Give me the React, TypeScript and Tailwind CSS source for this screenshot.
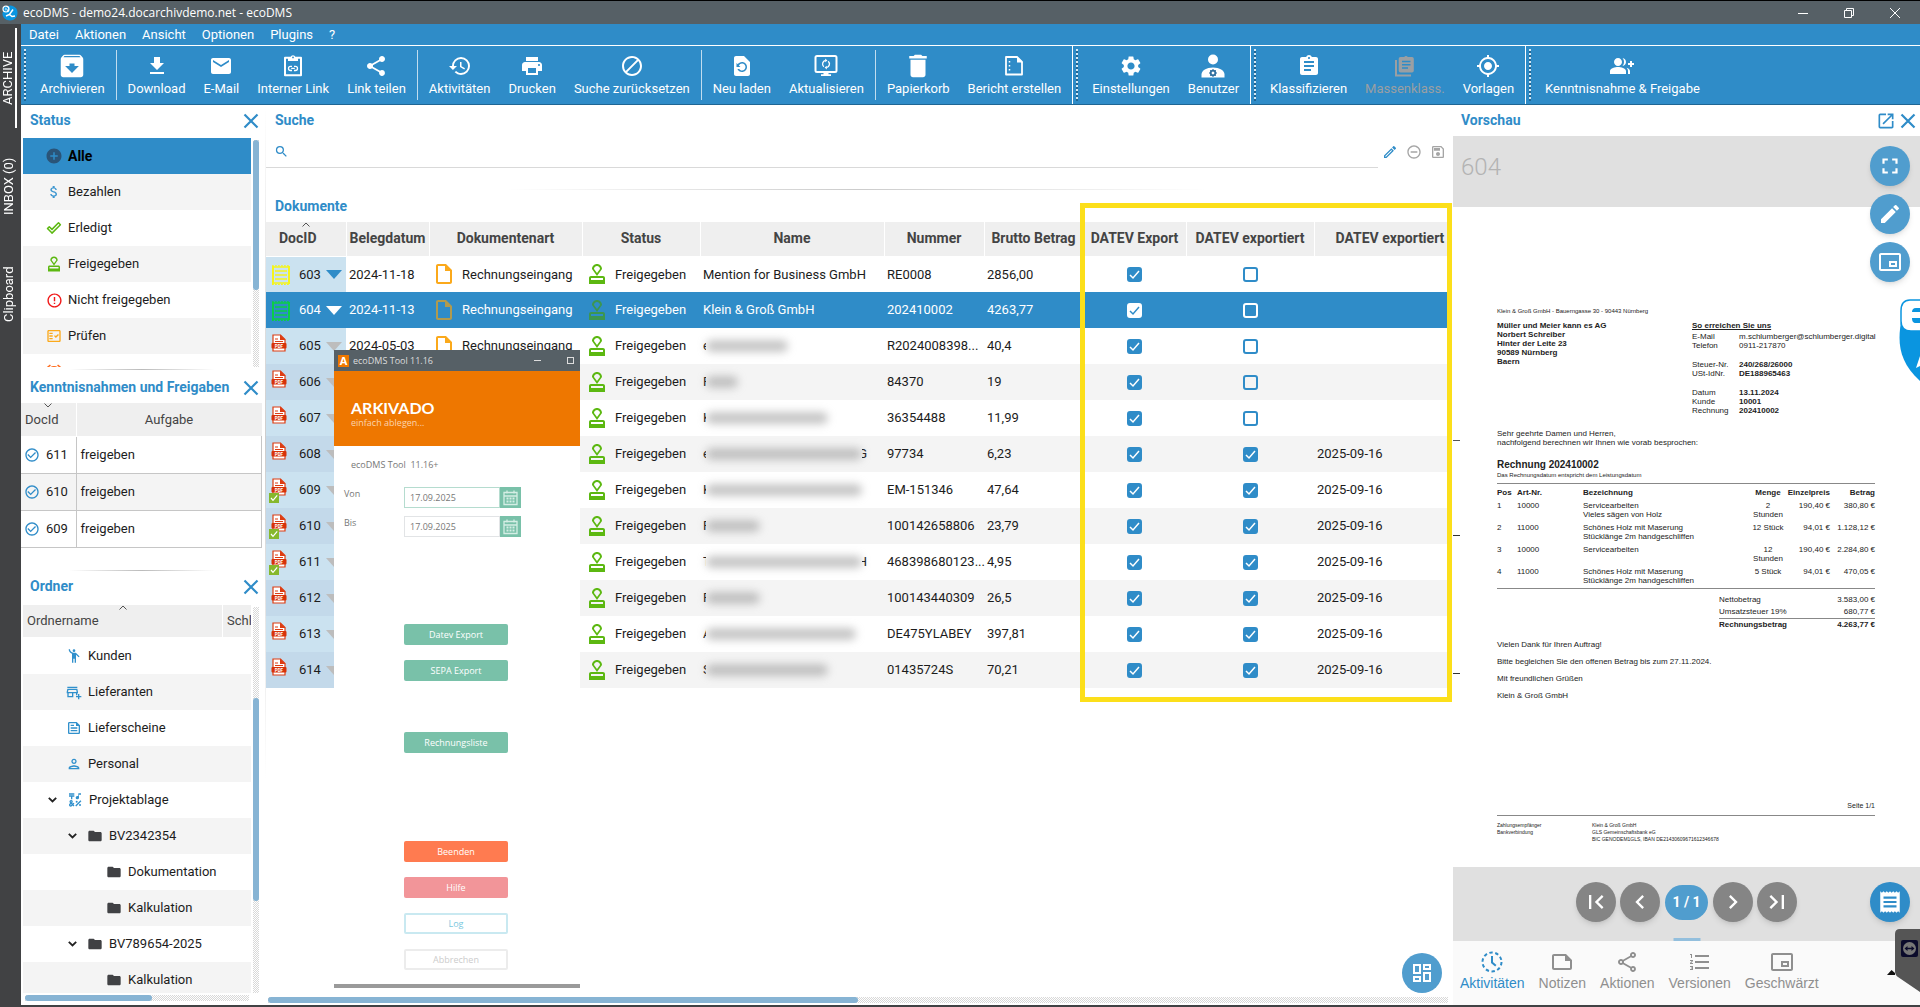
import React from 'react'
import {
    MdAddCircle, MdAlarm, MdArchive, MdAssignment, MdAttachMoney, MdBlock, MdCheckCircleOutline, MdChevronLeft, MdChevronRight,
    MdDelete, MdDownload, MdEdit, MdEmail, MdEmojiPeople, MdEmojiSymbols, MdErrorOutline, MdFirstPage, MdFolder,
    MdFormatListNumbered, MdFullscreen, MdGroupAdd, MdHistory, MdLastPage, MdMyLocation, MdOpenInNew, MdOutlineAddBusiness,
    MdOutlineApproval, MdOutlineDashboard, MdOutlineEdit, MdOutlineFactCheck, MdOutlineFeed, MdOutlineInsertDriveFile,
    MdOutlineNote, MdOutlinePerson, MdOutlinePictureInPictureAlt, MdOutlineSave, MdOutlineShare, MdPrint,
    MdReceipt, MdRemoveCircleOutline, MdRestorePage, MdSearch, MdSettings, MdShare,
} from 'react-icons/md'

const InternLinkIcon = () => (
    <svg width="24" height="24" viewBox="0 0 24 24" fill="none" stroke="currentColor">
        <path d="M4 3.8h16v17.4H4z" strokeWidth="2" strokeLinejoin="round" />
        <path d="M7 3h2.6a2.5 2.5 0 0 1 4.8 0H17v4H7z" fill="currentColor" stroke="none" />
        <circle cx="12" cy="3.4" r=".9" fill="#2f8cc8" stroke="none" />
        <path d="M11 12.3H9.6a2.1 2.1 0 0 0 0 4.2H11M13 12.3h1.4a2.1 2.1 0 0 1 0 4.2H13M10.2 14.4h3.6" strokeWidth="1.3" />
    </svg>
)

const RefreshScreenIcon = () => (
    <svg width="24" height="24" viewBox="0 0 24 24" fill="none" stroke="currentColor">
        <rect x="1.5" y="2" width="21" height="16" rx="1.5" strokeWidth="2" />
        <path d="M9.5 18h5v2.2H17V22H7v-1.8h2.5z" fill="currentColor" stroke="none" />
        <path d="M9.8 12.8A3.7 3.7 0 0 1 11.6 6.4M14.2 7.2a3.7 3.7 0 0 1-1.8 6.4" strokeWidth="1.3" />
        <path d="M11.2 4.5v3.8l2.2-1.9zM12.8 15.5v-3.8l-2.2 1.9z" fill="currentColor" stroke="none" />
    </svg>
)

const ReportIcon = () => (
    <svg width="24" height="24" viewBox="0 0 24 24" fill="none" stroke="currentColor">
        <path d="M4 3h11l5 5v12.500H4z" strokeWidth="1.8" strokeLinejoin="round" />
        <path d="M15 2.500l6 6h-6z" fill="currentColor" stroke="none" />
        <path d="M7.500 7v1.500M7.500 11v1.500M7.500 15v1.500" strokeWidth="1.500" />
    </svg>
)

const UserGearIcon = () => (
    <svg width="26" height="26" viewBox="0 0 26 26" fill="currentColor">
        <circle cx="13" cy="6.5" r="5" />
        <path d="M1.5 24.5v-3c0-4 5-7 11.500-7s11.500 3 11.500 7v3z" />
        <circle cx="13" cy="20" r="2.3" fill="none" stroke="#2f6f9f" strokeWidth="1.8" />
        <path d="M13 16v8M9 20h8M10.200 17.200l5.600 5.600M15.800 17.200l-5.600 5.600" stroke="#2f6f9f" strokeWidth="1" />
        <circle cx="13" cy="20" r="1.3" />
    </svg>
)

const MassIcon = () => (
    <svg width="24" height="24" viewBox="0 0 24 24" fill="currentColor">
        <path d="M8 3h3.200a2.200 2.200 0 0 1 3.600 0H19a1.800 1.800 0 0 1 1.800 1.800v12A1.800 1.800 0 0 1 19 18.500H7.500a1.800 1.800 0 0 1-1.800-1.700v-12A1.800 1.800 0 0 1 7.500 3z" />
        <path d="M3 6v15.500h15" fill="none" stroke="currentColor" strokeWidth="2" />
        <path d="M9 7.500h8.500M9 10.700h8.500M9 14h6" stroke="#2f8cc8" strokeWidth="1.500" />
    </svg>
)

const DoneIcon = () => (
    <svg width="16" height="16" viewBox="0 0 16 16" fill="none" stroke="#5cb811" strokeWidth="1.5">
        <path d="M1.5 8.5l1.800-1.800 2.700 2.700 6.500-6.600 1.900 1.900-8.400 8.400z" strokeLinejoin="round" />
    </svg>
)

const ReceiptIcon = ({ color }: { color: string }) => (
    <svg width="24" height="24" viewBox="0 0 24 24" fill="none" stroke={color}>
        <path d="M4 4v18M20 4v18" strokeWidth="2" />
        <path d="M3 5h18M3 21h18" strokeWidth="1.5" />
        <path d="M3 3.800h18M3 22.300h18" strokeWidth="1.2" strokeDasharray="1.800 1.200" />
        <path d="M6 9h12M6 13h12M6 17h12" strokeWidth="1.5" />
    </svg>
)

const PdfIcon = ({ done }: { done?: boolean }) => (
    <svg width="22" height="30" viewBox="0 0 22 30">
        <path d="M6 4h7.5l4.500 4.500V20H6z" fill="#fff" stroke="#dd3c12" strokeWidth="1.2" />
        <path d="M13 3.500l5.500 5.500H13z" fill="#dd3c12" />
        <path d="M8 8h3M8 10.500h8" stroke="#dd3c12" strokeWidth="1" />
        <rect x="4.500" y="12" width="15" height="5.500" rx="1" fill="#d83208" />
        <text x="11.900" y="16.500" fontSize="4.500" fontWeight="700" fontFamily="Roboto, sans-serif" textAnchor="middle" fill="#fff">PDF</text>
        {done && <rect x="2" y="18" width="10" height="10" fill="#86b82d" />}
        {done && <path d="M4 23l2 2.300 4.200-5" fill="none" stroke="#fff" strokeWidth="1.2" />}
    </svg>
)

const ActivityIcon = () => (
    <svg width="24" height="24" viewBox="0 0 24 24" fill="none" stroke="currentColor" strokeWidth="2">
        <circle cx="12" cy="12" r="9.5" strokeDasharray="3.4 2.57" />
        <path d="M12 6v6.500l3.800 3.300" />
    </svg>
)

const AppLogo = ({ size }: { size: number }) => (
    <svg width={size} height={size} viewBox="0 0 16 16">
        <path d="M2 5a7 7 0 0 1 13.500 3c0 4-3 7.500-7.500 7.500S0 12 .5 8z" fill="#0a95e0" />
        <circle cx="4" cy="4" r="3.6" fill="#fff" />
        <path d="M2.200 4h3.500a1.800 1.800 0 1 0-.6 1.400" fill="none" stroke="#0a95e0" strokeWidth="1.1" />
        <path d="M4 11l3.500-1.500L11 4.500M7.500 9.500L10 11.500l3-.5" fill="none" stroke="#fff" strokeWidth="1.5" />
    </svg>
)

const CloseIcon = () => (
    <svg width="16" height="16" viewBox="0 0 16 16" stroke="#2f8cc8" strokeWidth="2.2">
        <path d="M1.5 1.5l13 13M14.5 1.5l-13 13" />
    </svg>
)

const SortMark = ({ down }: { down?: boolean }) => (
    <svg width="9" height="5" viewBox="0 0 9 5" fill="none" stroke="#555" className="absolute top-0 left-1/2 -translate-x-1/2">
        <path d={down ? 'M1 .5l3.500 3.500L8 .5' : 'M1 4.500L4.500 1 8 4.500'} />
    </svg>
)

const toolbar = [
    [
        [{ label: 'Archivieren', icon: <MdArchive size={30} /> }],
        [
            { label: 'Download', icon: <MdDownload size={24} /> },
            { label: 'E-Mail', icon: <MdEmail size={24} /> },
            { label: 'Interner Link', icon: <InternLinkIcon /> },
            { label: 'Link teilen', icon: <MdShare size={24} /> },
        ],
        [
            { label: 'Aktivitäten', icon: <MdHistory size={24} /> },
            { label: 'Drucken', icon: <MdPrint size={24} /> },
            { label: 'Suche zurücksetzen', icon: <MdBlock size={24} /> },
        ],
        [
            { label: 'Neu laden', icon: <MdRestorePage size={24} /> },
            { label: 'Aktualisieren', icon: <RefreshScreenIcon /> },
        ],
        [
            { label: 'Papierkorb', icon: <MdDelete size={30} /> },
            { label: 'Bericht erstellen', icon: <ReportIcon /> },
        ],
    ],
    [[
        { label: 'Einstellungen', icon: <MdSettings size={24} /> },
        { label: 'Benutzer', icon: <UserGearIcon /> },
    ]],
    [[
        { label: 'Klassifizieren', icon: <MdAssignment size={24} /> },
        { label: 'Massenklass.', icon: <MassIcon />, disabled: true },
        { label: 'Vorlagen', icon: <MdMyLocation size={24} /> },
    ]],
    [[{ label: 'Kenntnisnahme & Freigabe', icon: <MdGroupAdd size={24} /> }]],
] as { label: string; icon: React.ReactNode; disabled?: boolean }[][][]

const statusList = [
    { label: 'Alle', icon: <MdAddCircle size={18} color="#2a5478" /> },
    { label: 'Bezahlen', icon: <MdAttachMoney size={16} color="#3d96d0" /> },
    { label: 'Erledigt', icon: <DoneIcon /> },
    { label: 'Freigegeben', icon: <MdOutlineApproval size={18} color="#5cb811" /> },
    { label: 'Nicht freigegeben', icon: <MdErrorOutline size={17} color="#f01818" /> },
    { label: 'Prüfen', icon: <MdOutlineFactCheck size={16} color="#fba91b" /> },
    { label: '', icon: <MdAlarm size={18} color="#ff6a1a" /> },
]

const folders = [
    { label: 'Kunden', indent: 'pl-[43px]', icon: <MdEmojiPeople size={16} color="#3090cc" /> },
    { label: 'Lieferanten', indent: 'pl-[43px]', icon: <MdOutlineAddBusiness size={16} color="#3090cc" /> },
    { label: 'Lieferscheine', indent: 'pl-[43px]', icon: <MdOutlineFeed size={16} color="#3090cc" /> },
    { label: 'Personal', indent: 'pl-[43px]', icon: <MdOutlinePerson size={16} color="#3090cc" /> },
    { label: 'Projektablage', indent: 'pl-[25px]', open: true, icon: <MdEmojiSymbols size={16} color="#3090cc" /> },
    { label: 'BV2342354', indent: 'pl-[45px]', open: true, icon: <MdFolder size={18} color="#404144" /> },
    { label: 'Dokumentation', indent: 'pl-[83px]', icon: <MdFolder size={18} color="#404144" /> },
    { label: 'Kalkulation', indent: 'pl-[83px]', icon: <MdFolder size={18} color="#404144" /> },
    { label: 'BV789654-2025', indent: 'pl-[45px]', open: true, icon: <MdFolder size={18} color="#404144" /> },
    { label: 'Kalkulation', indent: 'pl-[83px]', icon: <MdFolder size={18} color="#404144" /> },
]

// blurred names only keep the first letter and a bar of the given width
const docs = [
    { id: 603, date: '2024-11-18', name: 'Mention for Business GmbH', nr: 'RE0008', sum: '2856,00', color: '#f5f51c' },
    { id: 604, date: '2024-11-13', name: 'Klein & Groß GmbH', nr: '202410002', sum: '4263,77', color: '#0bce46' },
    { id: 605, date: '2024-05-03', lead: 'e', bar: 82, nr: 'R2024008398...', sum: '40,4' },
    { id: 606, lead: 'F', bar: 32, nr: '84370', sum: '19' },
    { id: 607, lead: 'K', bar: 122, nr: '36354488', sum: '11,99' },
    { id: 608, lead: 'e', bar: 156, tail: 'G', nr: '97734', sum: '6,23', exported: '2025-09-16' },
    { id: 609, lead: 'K', bar: 156, nr: 'EM-151346', sum: '47,64', exported: '2025-09-16', done: true },
    { id: 610, lead: 'F', bar: 54, nr: '100142658806', sum: '23,79', exported: '2025-09-16', done: true },
    { id: 611, lead: 'T', bar: 156, tail: 'H', nr: '468398680123...', sum: '4,95', exported: '2025-09-16', done: true },
    { id: 612, lead: 'F', bar: 54, nr: '100143440309', sum: '26,5', exported: '2025-09-16' },
    { id: 613, lead: 'A', bar: 150, nr: 'DE475YLABEY', sum: '397,81', exported: '2025-09-16' },
    { id: 614, lead: 'S', bar: 122, nr: '01435724S', sum: '70,21', exported: '2025-09-16' },
]

const positions = [
    { pos: 1, art: '10000', text: ['Servicearbeiten', 'Vieles sägen von Holz'], menge: ['2', 'Stunden'], preis: '190,40 €', betrag: '380,80 €' },
    { pos: 2, art: '11000', text: ['Schönes Holz mit Maserung', 'Stücklänge 2m handgeschliffen'], menge: ['12 Stück'], preis: '94,01 €', betrag: '1.128,12 €' },
    { pos: 3, art: '10000', text: ['Servicearbeiten'], menge: ['12', 'Stunden'], preis: '190,40 €', betrag: '2.284,80 €' },
    { pos: 4, art: '11000', text: ['Schönes Holz mit Maserung', 'Stücklänge 2m handgeschliffen'], menge: ['5 Stück'], preis: '94,01 €', betrag: '470,05 €' },
]

const track = 'bg-[repeating-conic-gradient(#d8d8d8_0_25%,#ffffff_0_50%)] bg-[length:2px_2px]'

const PanelTitle = ({ title, close, className }: { title: string; close?: boolean; className: string }) => (
    <div className={'flex items-center justify-between pl-[9px] pr-[3px] shrink-0 ' + className}>
        <h2 className="text-[14px] font-bold text-[#2f8cc8] whitespace-nowrap">{title}</h2>
        {close && <button aria-label={title + ' schließen'}><CloseIcon /></button>}
    </div>
)

const Splitter = () => <div className="h-px w-[146px] mx-auto shrink-0 bg-linear-to-r from-transparent via-[#bbbbbb] to-transparent" />

const Check = ({ checked, selected, label }: { checked: boolean; selected: boolean; label: string }) => (
    <label className="grid place-items-center">
        <input type="checkbox" defaultChecked={checked} aria-label={label}
            className={'[grid-area:1/1] appearance-none size-[15px] rounded-[3px] border-2 ' +
                (selected ? 'border-white checked:bg-white' : 'border-[#2f8cc8] checked:bg-[#2f8cc8]')} />
        {checked && (
            <svg width="15" height="15" viewBox="0 0 15 15" fill="none" stroke={selected ? '#2f8cc8' : '#fff'} strokeWidth="1.5" className="[grid-area:1/1] pointer-events-none">
                <path d="M3 8l3 3 6-7" />
            </svg>
        )}
    </label>
)

const Toolbar = () => (
    <div className="flex h-[60px] bg-[#2f8cc8] border-t border-t-white border-b border-b-[#1f6694] text-white shrink-0 overflow-hidden">
        {toolbar.map((group, g) => (
            <div key={g} className={'flex items-stretch pl-[3px] ' + (g < 3 ? 'border-r border-white' : '')}>
                <div className="w-[2px] my-[3px] mr-[5px] bg-[repeating-linear-gradient(#ffffffcc_0_2px,#1f6694_2px_4px)]" />
                {group.map((part, p) => (
                    <div key={p} className="flex items-center">
                        {p > 0 && <div className="w-px h-[50px] mx-[2px] bg-white/70" />}
                        {part.map((b) => (
                            <button key={b.label} disabled={b.disabled} className={'flex flex-col items-center px-[9px] pb-[2px] text-[13px] leading-[16px] whitespace-nowrap ' + (b.disabled ? 'text-[#9a9fa3]' : '')}>
                                <span className="h-[30px] flex items-center justify-center">{b.icon}</span>
                                {b.label}
                            </button>
                        ))}
                        {p === group.length - 1 && g < 3 && <div className="w-[2px]" />}
                    </div>
                ))}
            </div>
        ))}
    </div>
)

const Sidebar = () => (
    <aside className="w-[241px] shrink-0 flex flex-col bg-white pb-[4px]">
        <PanelTitle title="Status" close className="h-[31px] mb-[2px]" />
        <div className="flex h-[229px] shrink-0 pl-[2px] gap-[2px] overflow-hidden">
            <ul className="flex-1">
                {statusList.map((s, i) => (
                    <li key={i} className={'flex items-center h-9 pl-[22px] ' + (i === 0 ? 'bg-[#2f8cc8] font-bold text-[14px] text-black' : i % 2 ? 'text-[13px] bg-[#f4f4f4]' : 'text-[13px]')}>
                        <span className="w-[18px] mr-[5px] flex justify-center">{s.icon}</span>
                        {s.label}
                    </li>
                ))}
            </ul>
            <div className={'w-[6px] mt-[2px] mr-[3px] ' + track}>
                <div className="h-[150px] rounded-full bg-[#87b4d4]" />
            </div>
        </div>
        <div className="h-[5px] shrink-0 flex items-center"><Splitter /></div>
        <PanelTitle title="Kenntnisnahmen und Freigaben" close className="h-[31px]" />
        <table className="w-full table-fixed text-[13px]">
            <colgroup><col className="w-[55px]" /><col /></colgroup>
            <thead>
                <tr className="h-[33px] bg-[#efefef] text-[#444] border-b border-white">
                    <th className="relative font-normal text-left pl-1 border-r border-white"><SortMark down />DocId</th>
                    <th className="font-normal">Aufgabe</th>
                </tr>
            </thead>
            <tbody>
                {[611, 610, 609].map((id, i) => (
                    <tr key={id} className={'h-[37px] border-b border-[#c6c6c6] ' + (i === 1 ? 'bg-[#f4f4f4]' : '')}>
                        <td className="border-r border-[#c6c6c6]">
                            <div className="flex items-center pl-[3px] gap-[6px]"><MdCheckCircleOutline size={16} color="#2f8cc8" />{id}</div>
                        </td>
                        <td className="pl-1 border-r border-[#c6c6c6]">freigeben</td>
                    </tr>
                ))}
            </tbody>
        </table>
        <div className="h-[23px] shrink-0 flex items-end"><Splitter /></div>
        <PanelTitle title="Ordner" close className="h-[32px] mb-[2px]" />
        <div className="flex flex-1 min-h-0 pl-[2px] gap-[2px]">
            <div className="flex-1 overflow-hidden text-[13px]">
                <div className="flex h-8 mb-px text-[#444]">
                    <div className="relative w-[199px] bg-[#efefef] flex items-center pl-1"><SortMark />Ordnername</div>
                    <div className="flex-1 ml-px bg-[#efefef] flex items-center pl-1 overflow-hidden">Schl</div>
                </div>
                {folders.map((f, i) => (
                    <div key={i} className={'flex items-center h-9 ' + f.indent + (i % 2 ? ' bg-[#f4f4f4]' : '')}>
                        {f.open && (
                            <svg width="9" height="6" viewBox="0 0 9 6" fill="none" stroke="#222" strokeWidth="1.8" className="mr-[10px]"><path d="M.8.8l3.700 3.700L8.200.8" /></svg>
                        )}
                        <span className="w-[16px] mr-[6px] flex justify-center shrink-0">{f.icon}</span>
                        {f.label}
                    </div>
                ))}
            </div>
            <div className={'w-[6px] mt-[2px] mr-[3px] pt-[91px] ' + track}>
                <div className="h-[203px] rounded-full bg-[#87b4d4]" />
            </div>
        </div>
        <div className={'h-[6px] mt-[2px] ml-1 mr-[13px] shrink-0 ' + track}>
            <div className="h-full w-[127px] rounded-full bg-[#87b4d4]" />
        </div>
    </aside>
)

const DocRow = ({ d, i }: { d: any; i: number }) => {
    const selected = d.id === 604
    const idBg = selected ? '' : i % 2 ? 'bg-[#c3d9ea]' : 'bg-[#cbe2f0]'
    return (
        <tr className={'h-9 ' + (selected ? 'bg-[#2f8cc8] text-white' : i % 2 ? 'bg-[#f4f4f4]' : '')}>
            <td className={idBg}>
                <div className="flex items-center pl-px">
                    {d.color ? <span className="ml-[2px] mr-[6px]"><ReceiptIcon color={d.color} /></span> : <span className="mr-[10px] -my-3"><PdfIcon done={d.done} /></span>}
                    {d.id}
                    <svg width="16" height="9" viewBox="0 0 16 9" className="ml-[5px]"><path d="M0 0h16L8 9z" fill={selected ? '#fff' : i === 0 ? '#2f8cc8' : '#bdbdbd'} /></svg>
                </div>
            </td>
            <td className="pl-[3px]">{d.date}</td>
            <td>
                {d.date && <div className="flex items-center pl-[3px] gap-[6px]"><MdOutlineInsertDriveFile size={24} color={selected ? '#b09a4e' : '#fba91b'} />Rechnungseingang</div>}
            </td>
            <td>
                <div className="flex items-center pl-[3px] gap-[6px]"><MdOutlineApproval size={24} color={selected ? '#3c9650' : '#5cb811'} />Freigegeben</div>
            </td>
            <td className="pl-[3px]">
                {d.name || (
                    <div className="flex items-center">
                        <span className="w-[3px] overflow-hidden">{d.lead}</span>
                        <div className="h-[12px] rounded-full bg-[#8d8d8d]/50 blur-[4px]" style={{ width: d.bar }} />
                        {d.tail && <span className="w-[5px] overflow-hidden flex justify-end">{d.tail}</span>}
                    </div>
                )}
            </td>
            <td className="pl-[3px]">{d.nr}</td>
            <td className="pl-[3px]">{d.sum}</td>
            <td><Check checked selected={selected} label={'DATEV Export ' + d.id} /></td>
            <td><Check checked={!!d.exported} selected={selected} label={'DATEV exportiert ' + d.id} /></td>
            <td className="pl-[3px]">{d.exported}</td>
        </tr>
    )
}

const ToolButton = ({ label, className }: { label: string; className: string }) => (
    <button className={'block w-[104px] h-[21px] rounded-[2px] text-[9px] ' + className}>{label}</button>
)

const ToolWindow = () => (
    <div className="absolute left-[68px] top-[245px] w-[246px] bg-white font-['Open_Sans',sans-serif] text-[9px] text-[#777] border-b-4 border-[#9a9a9a]">
        <div className="h-[21px] bg-[#566066] flex items-center pl-1 text-[#dddddd]">
            <span className="w-[11px] h-[12px] bg-[#ee7700] text-white font-bold text-[11px] leading-[12px] text-center mr-1">A</span>
            ecoDMS Tool 11.16
            <span className="ml-auto w-[7px] h-px bg-[#ddd]" />
            <span className="ml-[26px] mr-[6px] w-[7px] h-[7px] border border-[#ddd]" />
        </div>
        <div className="h-[75px] bg-[#ee7700] pl-[17px] pt-[28px] text-white">
            <p className="text-[16px] leading-[18px] font-bold font-[Lato,sans-serif]">ARKIVADO</p>
            <p className="leading-[12px] text-[#fbd3ae]">einfach ablegen...</p>
        </div>
        <p className="pl-[17px] pt-[13px] leading-[12px]">ecoDMS Tool&nbsp; 11.16+</p>
        {['Von', 'Bis'].map((l, i) => (
            <div key={l} className={'flex items-center pl-[10px] ' + (i === 0 ? 'mt-4' : 'mt-2')}>
                <label htmlFor={l} className="w-[60px] pb-2 leading-[12px]">{l}</label>
                <input id={l} defaultValue="17.09.2025" className={'w-[96px] h-[21px] pl-[5px] border outline-none ' + (i === 0 ? 'border-[#b5dccf]' : 'border-[#e2e4e6]')} />
                <button aria-label={'Kalender ' + l} className="w-[21px] h-[21px] bg-[#79c1a9] grid place-items-center">
                    <svg width="15" height="16" viewBox="0 0 15 16" fill="none" stroke="#d5eee5" strokeWidth="1.3">
                        <path d="M1 2.500h13v12H1zM1 6h13M4 .5v3M11 .5v3" />
                        <path d="M3.500 8.500h8M3.500 11.500h8" strokeDasharray="2 1" strokeWidth="2" />
                    </svg>
                </button>
            </div>
        ))}
        <div className="pl-[70px] pb-[14px] text-white">
            <ToolButton label="Datev Export" className="mt-[87px] bg-[#79c1a9]" />
            <ToolButton label="SEPA Export" className="mt-[15px] bg-[#79c1a9]" />
            <ToolButton label="Rechnungsliste" className="mt-[51px] bg-[#79c1a9]" />
            <ToolButton label="Beenden" className="mt-[88px] bg-[#ff7b50]" />
            <ToolButton label="Hilfe" className="mt-[15px] bg-[#f29599]" />
            <ToolButton label="Log" className="mt-[15px] border-2 border-[#c9e9f1] text-[#79c8de]" />
            <ToolButton label="Abbrechen" className="mt-[15px] border-2 border-[#ececec] text-[#cccccc]" />
        </div>
    </div>
)

const Documents = () => (
    <main className="relative flex-1 min-w-0 flex flex-col bg-white overflow-hidden">
        <PanelTitle title="Suche" className="h-[31px]" />
        <div className="flex items-end h-[32px] shrink-0 text-[#a5a5a5]">
            <label className="flex flex-1 items-center h-full pl-2 border-b border-[#d9d9d9] text-[#2f8cc8]">
                <MdSearch size={15} />
                <input aria-label="Suche" className="flex-1 h-6 ml-2 outline-none text-[13px]" />
            </label>
            <button aria-label="Bearbeiten" className="mb-2 ml-1 text-[#2f8cc8]"><MdOutlineEdit size={16} /></button>
            <button aria-label="Entfernen" className="mb-2 ml-2"><MdRemoveCircleOutline size={16} /></button>
            <button aria-label="Speichern" className="mb-2 ml-2 mr-[2px]"><MdOutlineSave size={16} /></button>
        </div>
        <div className="h-[22px] shrink-0 flex items-end"><div className="h-px w-[700px] mx-auto bg-linear-to-r from-transparent via-[#cccccc] to-transparent" /></div>
        <PanelTitle title="Dokumente" className="h-[32px]" />
        <table className="w-full table-fixed text-[13px] whitespace-nowrap">
            <colgroup>
                <col className="w-[80px]" /><col className="w-[83px]" /><col className="w-[153px]" /><col className="w-[118px]" /><col className="w-[184px]" />
                <col className="w-[100px]" /><col className="w-[99px]" /><col className="w-[103px]" /><col className="w-[128px]" /><col />
            </colgroup>
            <thead>
                <tr className="h-[34px] bg-[#efefef] text-[14px] text-[#444] border-b border-white">
                    <th className="relative border-r border-white pr-4"><SortMark />DocID</th>
                    {['Belegdatum', 'Dokumentenart', 'Status', 'Name', 'Nummer', 'Brutto Betrag', 'DATEV Export', 'DATEV exportiert'].map((h) => (
                        <th key={h} className="border-r border-white">{h}</th>
                    ))}
                    <th className="text-left pl-[21px]">DATEV exportiert</th>
                </tr>
            </thead>
            <tbody>{docs.map((d, i) => <DocRow key={d.id} d={d} i={i} />)}</tbody>
        </table>
        <div className={'h-[6px] mt-auto mb-[2px] ml-[2px] shrink-0 ' + track}>
            <div className="h-full w-1/2 rounded-full bg-[#87b4d4]" />
        </div>
        <ToolWindow />
        <button aria-label="Dashboard" className="absolute right-[6px] bottom-[12px] size-10 rounded-full bg-[#509dce] text-white grid place-items-center"><MdOutlineDashboard size={24} /></button>
    </main>
)

const Invoice = () => (
    <div className="h-full pl-[44px] pr-[45px] pt-[100px] font-['Liberation_Sans',sans-serif] text-[8px] leading-[9px] text-[#222]">
        <p className="text-[6px] leading-[8px]">Klein &amp; Groß GmbH - Bauerngasse 30 - 90443 Nürnberg</p>
        <div className="flex justify-between pt-[6px] h-[106px]">
            <p className="font-bold">Müller und Meier kann es AG<br />Norbert Schreiber<br />Hinter der Leite 23<br />90589 Nürnberg<br />Baern</p>
            <div className="w-[183px]">
                <p className="font-bold underline mb-[2px]">So erreichen Sie uns</p>
                <dl className="grid grid-cols-[47px_1fr]">
                    <dt>E-Mail</dt><dd>m.schlumberger@schlumberger.digital</dd>
                    <dt>Telefon</dt><dd>0911-217870</dd>
                    <dt className="mt-[10px]">Steuer-Nr.</dt><dd className="mt-[10px] font-bold">240/268/26000</dd>
                    <dt>USt-IdNr.</dt><dd className="font-bold">DE188965463</dd>
                    <dt className="mt-[10px]">Datum</dt><dd className="mt-[10px] font-bold">13.11.2024</dd>
                    <dt>Kunde</dt><dd className="font-bold">10001</dd>
                    <dt>Rechnung</dt><dd className="font-bold">202410002</dd>
                </dl>
            </div>
        </div>
        <p className="pt-[8px]">Sehr geehrte Damen und Herren,<br />nachfolgend berechnen wir Ihnen wie vorab besprochen:</p>
        <p className="font-bold text-[10px] leading-[12px] mt-[12px]">Rechnung 202410002</p>
        <p className="text-[6px] leading-[8px]">Das Rechnungsdatum entspricht dem Leistungsdatum</p>
        <table className="w-full table-fixed mt-[4px] border-y border-[#888]">
            <colgroup><col className="w-[20px]" /><col className="w-[66px]" /><col /><col className="w-[36px]" /><col className="w-[44px]" /><col className="w-[45px]" /></colgroup>
            <thead>
                <tr className="h-[17px] text-left">
                    <th>Pos</th><th>Art-Nr.</th><th>Bezeichnung</th><th className="text-center">Menge</th><th className="text-right">Einzelpreis</th><th className="text-right">Betrag</th>
                </tr>
            </thead>
            <tbody>
                {positions.map((p) => (
                    <tr key={p.pos} className="h-[22px] align-top whitespace-nowrap">
                        <td>{p.pos}</td>
                        <td>{p.art}</td>
                        <td>{p.text.map((t) => <div key={t}>{t}</div>)}</td>
                        <td className="text-center">{p.menge.map((t) => <div key={t}>{t}</div>)}</td>
                        <td className="text-right">{p.preis}</td>
                        <td className="text-right">{p.betrag}</td>
                    </tr>
                ))}
            </tbody>
        </table>
        <div className="w-[156px] ml-auto pt-[5px] leading-[12px]">
            <p className="flex justify-between"><span>Nettobetrag</span><span>3.583,00 €</span></p>
            <p className="flex justify-between"><span>Umsatzsteuer 19%</span><span>680,77 €</span></p>
            <p className="flex justify-between font-bold border-t border-[#888]"><span>Rechnungsbetrag</span><span>4.263,77 €</span></p>
        </div>
        <div className="pt-[9px] flex flex-col gap-2">
            <p>Vielen Dank für Ihren Auftrag!</p>
            <p>Bitte begleichen Sie den offenen Betrag bis zum 27.11.2024.</p>
            <p>Mit freundlichen Grüßen</p>
            <p>Klein &amp; Groß GmbH</p>
        </div>
        <p className="mt-[101px] text-right text-[7px]">Seite 1/1</p>
        <div className="mt-[5px] pt-[6px] flex border-t border-[#888] text-[5px] leading-[7px]">
            <p className="w-[95px]">Zahlungsempfänger<br />Bankverbindung</p>
            <p>Klein &amp; Groß GmbH<br />GLS Gemeinschaftsbank eG<br />BIC GENODEM1GLS, IBAN DE21430609671612346678</p>
        </div>
    </div>
)

const roundBtn = 'size-10 rounded-full grid place-items-center text-white shadow-md '

const Preview = () => (
    <section className="relative w-[467px] shrink-0 flex flex-col bg-white overflow-hidden">
        <div className="flex items-center h-[31px] pl-2 pr-1 shrink-0">
            <h2 className="text-[14px] font-bold text-[#2f8cc8] mr-auto">Vorschau</h2>
            <button aria-label="In neuem Fenster öffnen" className="text-[#2f8cc8] mr-[4px]"><MdOpenInNew size={20} /></button>
            <button aria-label="Vorschau schließen"><CloseIcon /></button>
        </div>
        <div className="h-[71px] pl-2 pb-[9px] flex items-center bg-[#e0e0e0] text-[24px] font-light text-[#b3b3b3] shrink-0">604</div>
        <div className="relative flex-1 min-h-0 overflow-hidden">
            <Invoice />
            <i className="absolute left-0 top-[233px] w-[7px] h-px bg-[#555]" />
            <i className="absolute left-0 top-[328px] w-[7px] h-px bg-[#333]" />
            <i className="absolute left-0 top-[466px] w-[7px] h-px bg-[#333]" />
            <svg width="21" height="84" viewBox="0 0 21 84" className="absolute right-0 top-[92px]">
                <path d="M3 18C-2 42-1 62 21 82V8z" fill="#0a95e0" />
                <path d="M21 1H11C4 1 2 6 2 12v10c0 7 4 10 10 10h9" fill="#fff" stroke="#0a95e0" strokeWidth="1.5" />
                <path d="M21 9h-4c-3 0-4 2-4 4h8zM13 19h8v5h-4c-3 0-4-2-4-5z" fill="#0a95e0" />
                <path d="M17 69l4-12v10z" fill="#fff" />
            </svg>
        </div>
        <div className="relative h-[74px] shrink-0 bg-[#e0e0e0] flex items-center justify-center pb-1 gap-1">
            <button aria-label="Erste Seite" className={roundBtn + 'bg-[#858585]'}><MdFirstPage size={28} /></button>
            <button aria-label="Vorige Seite" className={roundBtn + 'bg-[#858585]'}><MdChevronLeft size={28} /></button>
            <span className="w-[43px] h-[35px] mx-px rounded-full bg-[#509dce] text-white text-[14px] font-bold flex items-center justify-center">1 / 1</span>
            <button aria-label="Nächste Seite" className={roundBtn + 'bg-[#858585]'}><MdChevronRight size={28} /></button>
            <button aria-label="Letzte Seite" className={roundBtn + 'bg-[#858585]'}><MdLastPage size={28} /></button>
            <div className="absolute bottom-0 left-1/2 -translate-x-1/2 w-[27px] h-[3px] bg-[#93bfdd]" />
            <button aria-label="Belege" className={roundBtn + 'absolute right-[10px] top-[15px] bg-[#2f8cc8]'}><MdReceipt size={26} /></button>
        </div>
        <nav className="h-[64px] shrink-0 bg-[#fafafa] flex items-start pt-[9px] font-['Liberation_Sans',sans-serif] text-[14px] leading-[18px] text-[#8f8f8f]">
            {[
                { label: 'Aktivitäten', icon: <ActivityIcon /> },
                { label: 'Notizen', icon: <MdOutlineNote size={24} /> },
                { label: 'Aktionen', icon: <MdOutlineShare size={24} /> },
                { label: 'Versionen', icon: <MdFormatListNumbered size={24} /> },
                { label: 'Geschwärzt', icon: <MdOutlinePictureInPictureAlt size={24} /> },
            ].map((t, i) => (
                <button key={t.label} className={'flex flex-col items-center px-[7px] ' + (i === 0 ? 'text-[#2f8cc8]' : '')}>
                    {t.icon}
                    {t.label}
                </button>
            ))}
        </nav>
        <div className="absolute right-[10px] top-[41px] flex flex-col gap-2">
            <button aria-label="Vollbild" className={roundBtn + 'bg-[#509dce]'}><MdFullscreen size={26} /></button>
            <button aria-label="Bearbeiten" className={roundBtn + 'bg-[#509dce]'}><MdEdit size={24} /></button>
            <button aria-label="Bild im Bild" className={roundBtn + 'bg-[#509dce]'}><MdOutlinePictureInPictureAlt size={24} /></button>
        </div>
        <svg width="34" height="64" viewBox="0 0 34 64" className="absolute right-0 bottom-[12px]">
            <path d="M9 5q0-5 5-5h20v63L12 48q-3-2-3-6z" fill="#555" />
            <rect x="15" y="11" width="17" height="17" rx="2" fill="#0b0b2b" />
            <circle cx="23.5" cy="19.5" r="6.5" fill="#777" />
            <path d="M18.500 19.500l3-2.500v1.700h4v-1.700l3 2.500-3 2.500v-1.700h-4V22z" fill="#0b0b2b" />
            <path d="M1 46l4.500-5L9 44v2z" fill="#111" />
        </svg>
    </section>
)

const App = () => {
    return (
        <div className="h-screen flex flex-col bg-[#414244] pb-[2px] overflow-hidden font-[Roboto,sans-serif] text-[#1c1c1c]">
            <header className="h-6 shrink-0 flex items-center border-t border-black bg-[#566066] pl-[2px] text-white">
                <AppLogo size={16} />
                <h1 className="ml-[5px] text-[12px] font-['Open_Sans',sans-serif]">ecoDMS - demo24.docarchivdemo.net - ecoDMS</h1>
                <div className="ml-auto flex items-center gap-[36px] pr-[20px]">
                    <button aria-label="Minimieren"><svg width="10" height="10" className="block" stroke="#fff"><path d="M0 5.500h10" /></svg></button>
                    <button aria-label="Wiederherstellen"><svg width="10" height="10" className="block" fill="none" stroke="#fff"><path d="M.5 2.500h7v7h-7zM2.500 2V.5h7v7H8" /></svg></button>
                    <button aria-label="Schließen"><svg width="10" height="10" className="block" stroke="#fff"><path d="M0 0l10 10M10 0L0 10" /></svg></button>
                </div>
            </header>
            <div className="flex flex-1 min-h-0">
                <nav className="w-[21px] shrink-0 flex flex-col text-[13px] text-white">
                    <a href="#archive" className="h-[104px] pt-1 flex"><span className="w-[15px] flex items-center justify-center [writing-mode:vertical-rl] rotate-180 leading-[15px]">ARCHIVE</span><span className="w-[2px] h-full bg-white" /></a>
                    <a href="#inbox" className="h-[116px] w-[17px] flex items-center justify-center [writing-mode:vertical-rl] rotate-180 leading-[17px]">INBOX (0)</a>
                    <a href="#clipboard" className="h-[100px] w-[17px] flex items-center justify-center [writing-mode:vertical-rl] rotate-180 leading-[17px]">Clipboard</a>
                </nav>
                <div className="flex-1 min-w-0 flex flex-col">
                    <div className="h-[21px] shrink-0 bg-[#2f8cc8] flex items-center pl-2 gap-4 text-[13px] text-white">
                        {['Datei', 'Aktionen', 'Ansicht', 'Optionen', 'Plugins', '?'].map((m) => <button key={m}>{m}</button>)}
                    </div>
                    <Toolbar />
                    <div className="flex flex-1 min-h-0 bg-white">
                        <Sidebar />
                        <div className="w-1 shrink-0 flex justify-end"><div className="w-px h-3/4 bg-linear-to-b from-transparent via-[#cccccc] to-transparent" /></div>
                        <div className="relative flex-1 min-w-0 flex pr-[5px]">
                            <Documents />
                            <div className="absolute right-px top-[98px] w-[372px] h-[499px] border-[5px] border-[#fcdf1a] pointer-events-none" />
                        </div>
                        <Preview />
                    </div>
                </div>
            </div>
        </div>
    )
}

export default App
